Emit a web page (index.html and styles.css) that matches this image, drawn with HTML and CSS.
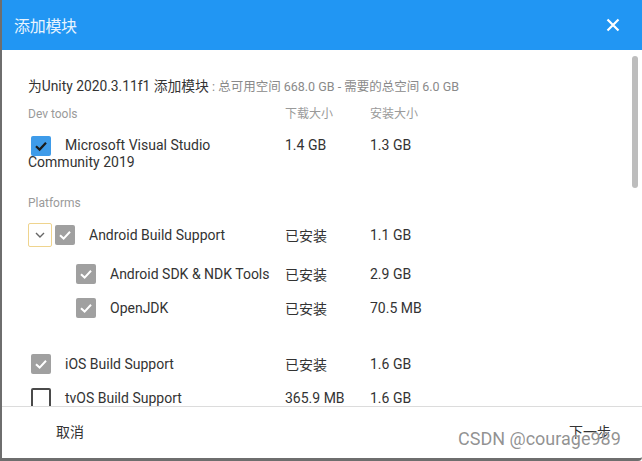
FILE: index.html
```html
<!DOCTYPE html>
<html lang="zh">
<head>
<meta charset="utf-8">
<title>添加模块</title>
<link rel="stylesheet" href="styles.css">
</head>
<body>
<div class="frame">
  <header class="titlebar">
    <h1 class="title">添加模块</h1>
    <span class="close" aria-label="关闭">
      <svg width="14" height="14" viewBox="0 0 14 14"><path d="M1.5 1.5 L12.5 12.5 M12.5 1.5 L1.5 12.5" stroke="#fff" stroke-width="2.2" fill="none"/></svg>
    </span>
  </header>

  <main class="content">
    <p class="summary">为Unity 2020.3.11f1 添加模块<span class="muted"> : 总可用空间 668.0 GB - 需要的总空间 6.0 GB</span></p>

    <div class="row head">
      <span class="label">Dev tools</span>
      <span class="label">下载大小</span>
      <span class="label">安装大小</span>
    </div>

    <div class="row ms">
      <span class="name"><span class="cb blue"><svg viewBox="0 0 20 20"><path d="M5 10.2 L8.6 13.6 L15 6.8" stroke="#1b1b1b" stroke-width="2.2" fill="none"/></svg></span>Microsoft Visual Studio Community 2019</span>
      <span>1.4 GB</span>
      <span>1.3 GB</span>
    </div>

    <div class="row head platforms">
      <span class="label">Platforms</span>
    </div>

    <div class="row item android">
      <span class="name"><span class="expand"><svg width="10" height="6" viewBox="0 0 10 6"><path d="M1 1 L5 5 L9 1" stroke="#666" stroke-width="1.4" fill="none"/></svg></span><span class="cb gray"><svg viewBox="0 0 20 20"><path d="M5 10.2 L8.6 13.6 L15 6.8" stroke="#fff" stroke-width="2" fill="none"/></svg></span>Android Build Support</span>
      <span>已安装</span>
      <span>1.1 GB</span>
    </div>

    <div class="row item sub sdk">
      <span class="name"><span class="cb gray"><svg viewBox="0 0 20 20"><path d="M5 10.2 L8.6 13.6 L15 6.8" stroke="#fff" stroke-width="2" fill="none"/></svg></span>Android SDK &amp; NDK Tools</span>
      <span>已安装</span>
      <span>2.9 GB</span>
    </div>

    <div class="row item sub jdk">
      <span class="name"><span class="cb gray"><svg viewBox="0 0 20 20"><path d="M5 10.2 L8.6 13.6 L15 6.8" stroke="#fff" stroke-width="2" fill="none"/></svg></span>OpenJDK</span>
      <span>已安装</span>
      <span>70.5 MB</span>
    </div>

    <div class="row item top ios">
      <span class="name"><span class="cb gray"><svg viewBox="0 0 20 20"><path d="M5 10.2 L8.6 13.6 L15 6.8" stroke="#fff" stroke-width="2" fill="none"/></svg></span>iOS Build Support</span>
      <span>已安装</span>
      <span>1.6 GB</span>
    </div>

    <div class="row item top tvos">
      <span class="name"><span class="cb empty"></span>tvOS Build Support</span>
      <span>365.9 MB</span>
      <span>1.6 GB</span>
    </div>

    <div class="scrollbar"></div>
  </main>

  <footer class="footer">
    <span class="btn">取消</span>
    <span class="btn">下一步</span>
    <span class="watermark">CSDN @courage989</span>
  </footer>
</div>
</body>
</html>
```

FILE: styles.css
```css
* { box-sizing: border-box; }
html, body { margin: 0; padding: 0; background: #fff; }
body {
  font-family: Roboto, "Noto Sans CJK SC", sans-serif;
  color: #333;
}
.frame {
  width: 642px;
  height: 461px;
  border-left: 2px solid #6e6e6e;
  border-bottom: 3px solid #6e6e6e;
  border-bottom-right-radius: 4px;
  display: flex;
  flex-direction: column;
  overflow: hidden;
}
.titlebar {
  height: 50px;
  flex: none;
  background: #2196f3;
  display: flex;
  align-items: center;
  justify-content: space-between;
  padding: 0 22px 0 12px;
}
.title {
  margin: 0;
  font-size: 16px;
  font-weight: normal;
  color: #e8f4fe;
  font-family: "Noto Sans CJK SC", sans-serif;
  letter-spacing: -0.3px;
}
.close { display: flex; margin-top: -1px; }

.content {
  position: relative;
  height: 356px;
  flex: none;
  overflow: hidden;
  padding: 0 0 0 26px;
  font-size: 14px;
}
.summary {
  margin: 0;
  padding-top: 26px;
  line-height: 20px;
  font-size: 13.8px;
  color: #333;
}
.muted { color: #8a8a8a; font-size: 12.5px; }

.row {
  display: grid;
  grid-template-columns: 257px 85px 1fr;
  align-items: center;
}
.head { margin-top: 7px; line-height: 20px; }
.label { font-size: 12px; color: #9a9a9a; }
.platforms { margin-top: 22px; }

.ms { margin-top: 13px; line-height: 17px; align-items: start; }
.ms .name { padding-right: 40px; }

.cb {
  display: inline-block;
  width: 20px;
  height: 20px;
  border-radius: 2px;
  vertical-align: middle;
  margin: -2px 14px -2px 3px;
}
.cb svg { display: block; width: 20px; height: 20px; }
.cb.blue { background: #3e9be9; }
.cb.gray { background: #a0a0a0; }
.cb.empty { border: 2px solid #4a4a4a; background: #fff; }

.item { height: 20px; }
.item .name { display: flex; align-items: center; }
.item .cb { margin: 0 14px 0 3px; }

.android { margin-top: 10px; height: 24px; }
.expand {
  width: 24px;
  height: 24px;
  border: 1px solid #efd48e;
  border-radius: 2px;
  display: flex;
  align-items: center;
  justify-content: center;
}
.android .cb { margin-left: 3px; }

.sub .name { padding-left: 45px; }
.sdk { margin-top: 17px; }
.jdk { margin-top: 14px; }
.ios { margin-top: 36px; }
.tvos { margin-top: 14px; }

.scrollbar {
  position: absolute;
  right: 4px;
  top: 6px;
  width: 6px;
  height: 132px;
  border-radius: 3px;
  background: #bdbdbd;
}

.footer {
  position: relative;
  flex: 1;
  border-top: 1px solid #dcdcdc;
  display: flex;
  align-items: center;
  justify-content: space-between;
  padding: 0 31px 0 54px;
  font-family: "Noto Sans CJK SC", sans-serif;
  font-size: 14px;
  color: #333;
}
.btn { margin-top: -3px; }
.watermark {
  position: absolute;
  left: 456px;
  top: 21px;
  font-family: Roboto, sans-serif;
  font-size: 18px;
  color: rgba(110, 110, 110, 0.75);
  text-shadow: 0 0 1px #fff;
  white-space: nowrap;
}
```
